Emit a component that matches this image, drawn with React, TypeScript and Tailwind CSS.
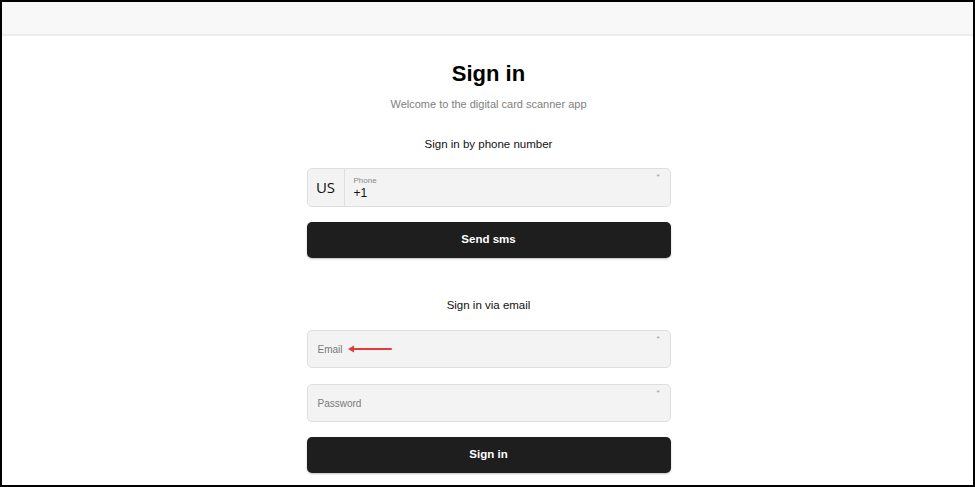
import { ReactNode } from "react";

function Field({ children }: { children: ReactNode }) {
  return (
    <div className="relative h-[38px] rounded-[5px] border border-[#dedede] bg-[#f3f3f3] flex items-center px-[10px]">
      {children}
      <span className="absolute right-[10px] top-[4px] text-[8px] leading-none text-[#999]">*</span>
    </div>
  );
}

function DarkButton({ label }: { label: string }) {
  return (
    <button className="h-[36px] w-full rounded-[5px] bg-[#1e1e1e] text-white text-[11.5px] font-bold shadow-[0_1px_2px_rgba(0,0,0,0.25)]">
      {label}
    </button>
  );
}

export default function App() {
  return (
    <div className="w-[975px] h-[487px] border-2 border-black bg-white overflow-hidden font-['Liberation_Sans',Arial,sans-serif]">
      {/* top bar */}
      <div className="h-[34px] bg-[#f8f8f8] border-b-2 border-[#ececec]" />

      <div className="flex justify-center pl-[2px]">
        <div className="w-[364px] flex flex-col">
          <h1 className="mt-[24px] text-center text-[22px] leading-[28px] font-bold text-black">Sign in</h1>
          <p className="mt-[8px] text-center text-[11px] leading-[16px] text-[#808080]">
            Welcome to the digital card scanner app
          </p>

          <p className="mt-[23px] text-center text-[11.5px] leading-[18px] text-[#111]">Sign in by phone number</p>

          {/* phone input */}
          <div className="mt-[15px] h-[39px] flex rounded-[5px] border border-[#dedede] bg-[#f3f3f3] relative">
            <div className="w-[37px] flex items-center justify-center border-r border-[#dedede] font-['Open_Sans',sans-serif] text-[15px] text-[#111]">
              US
            </div>
            <div className="flex flex-col pl-[9px] pt-[7px]">
              <span className="text-[8px] leading-[10px] text-[#8a8a8a]">Phone</span>
              <span className="text-[12px] leading-[14px] text-[#111]">+1</span>
            </div>
            <span className="absolute right-[10px] top-[4px] text-[8px] leading-none text-[#999]">*</span>
          </div>

          <div className="mt-[15px]">
            <DarkButton label="Send sms" />
          </div>

          <p className="mt-[38px] text-center text-[11.5px] leading-[18px] text-[#111]">Sign in via email</p>

          <div className="mt-[16px] relative">
            <Field>
              <span className="text-[10px] text-[#7a7a7a]">Email</span>
            </Field>
            {/* annotation arrow */}
            <svg className="absolute left-[40px] top-[14px]" width="46" height="10" viewBox="0 0 46 10">
              <line x1="4" y1="5" x2="44" y2="5" stroke="#e23b3b" strokeWidth="2" strokeLinecap="round" />
              <path d="M1 5 L7 1.5 L7 8.5 Z" fill="#e23b3b" />
            </svg>
          </div>

          <div className="mt-[16px]">
            <Field>
              <span className="text-[10px] text-[#7a7a7a]">Password</span>
            </Field>
          </div>

          <div className="mt-[15px]">
            <DarkButton label="Sign in" />
          </div>
        </div>
      </div>
    </div>
  );
}
